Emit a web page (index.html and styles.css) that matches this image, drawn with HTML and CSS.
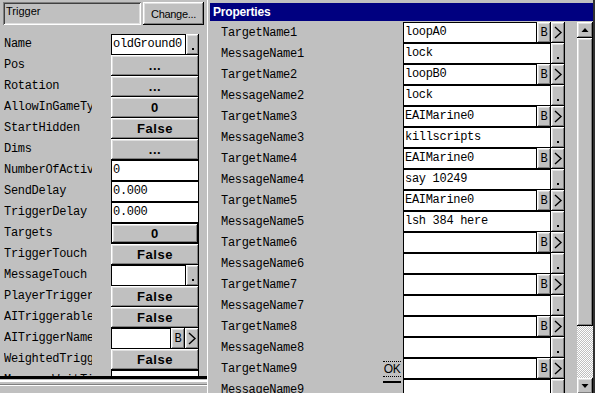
FILE: index.html
```html
<!DOCTYPE html>
<html>
<head>
<meta charset="utf-8">
<link rel="stylesheet" href="styles.css">
</head>
<body>
<div class="left">
  <div class="top">
    <div class="inset">Trigger</div>
    <div class="change raised">Change...</div>
  </div>
  <div class="list">
    <div class="lrow"><div class="llabel">Name</div><div class="lval"><div class="field">oldGround0</div><div class="dot raised"><i></i></div></div></div>
    <div class="lrow"><div class="llabel">Pos</div><div class="lval"><div class="btn raised">...</div></div></div>
    <div class="lrow"><div class="llabel">Rotation</div><div class="lval"><div class="btn raised">...</div></div></div>
    <div class="lrow"><div class="llabel">AllowInGameTypes</div><div class="lval"><div class="btn raised">0</div></div></div>
    <div class="lrow"><div class="llabel">StartHidden</div><div class="lval"><div class="btn raised">False</div></div></div>
    <div class="lrow"><div class="llabel">Dims</div><div class="lval"><div class="btn raised">...</div></div></div>
    <div class="lrow"><div class="llabel">NumberOfActivations</div><div class="lval"><div class="field">0</div></div></div>
    <div class="lrow"><div class="llabel">SendDelay</div><div class="lval"><div class="field">0.000</div></div></div>
    <div class="lrow"><div class="llabel">TriggerDelay</div><div class="lval"><div class="field">0.000</div></div></div>
    <div class="lrow"><div class="llabel">Targets</div><div class="lval"><div class="btn raised default">0</div></div></div>
    <div class="lrow"><div class="llabel">TriggerTouch</div><div class="lval"><div class="btn raised">False</div></div></div>
    <div class="lrow"><div class="llabel">MessageTouch</div><div class="lval"><div class="field"></div><div class="dot raised"><i></i></div></div></div>
    <div class="lrow"><div class="llabel">PlayerTriggerable</div><div class="lval"><div class="btn raised">False</div></div></div>
    <div class="lrow"><div class="llabel">AITriggerable</div><div class="lval"><div class="btn raised">False</div></div></div>
    <div class="lrow"><div class="llabel">AITriggerName</div><div class="lval"><div class="field"></div><div class="sbtn raised">B</div><div class="sbtn raised"><svg width="14" height="21" viewBox="0 0 14 21"><polyline points="4,5 10,10.5 4,16" fill="none" stroke="#000" stroke-width="1.4"/></svg></div></div></div>
    <div class="lrow"><div class="llabel">WeightedTrigger</div><div class="lval"><div class="btn raised">False</div></div></div>
    <div class="lrow"><div class="llabel">MessageWaitTime</div><div class="lval"><div class="field"></div></div></div>
  </div>
  <div class="splitter"></div>
</div>

<div class="right">
  <div class="title">Properties</div>
  <div class="content">
    <div class="rlist">
      <div class="rrow"><div class="rlabel">TargetName1</div><div class="field">loopA0</div><div class="sbtn raised">B</div><div class="sbtn raised"><svg width="14" height="21" viewBox="0 0 14 21"><polyline points="4,5 10,10.5 4,16" fill="none" stroke="#000" stroke-width="1.4"/></svg></div></div>
      <div class="rrow"><div class="rlabel">MessageName1</div><div class="field">lock</div><div class="dot raised"><i></i></div></div>
      <div class="rrow"><div class="rlabel">TargetName2</div><div class="field">loopB0</div><div class="sbtn raised">B</div><div class="sbtn raised"><svg width="14" height="21" viewBox="0 0 14 21"><polyline points="4,5 10,10.5 4,16" fill="none" stroke="#000" stroke-width="1.4"/></svg></div></div>
      <div class="rrow"><div class="rlabel">MessageName2</div><div class="field">lock</div><div class="dot raised"><i></i></div></div>
      <div class="rrow"><div class="rlabel">TargetName3</div><div class="field">EAIMarine0</div><div class="sbtn raised">B</div><div class="sbtn raised"><svg width="14" height="21" viewBox="0 0 14 21"><polyline points="4,5 10,10.5 4,16" fill="none" stroke="#000" stroke-width="1.4"/></svg></div></div>
      <div class="rrow"><div class="rlabel">MessageName3</div><div class="field">killscripts</div><div class="dot raised"><i></i></div></div>
      <div class="rrow"><div class="rlabel">TargetName4</div><div class="field">EAIMarine0</div><div class="sbtn raised">B</div><div class="sbtn raised"><svg width="14" height="21" viewBox="0 0 14 21"><polyline points="4,5 10,10.5 4,16" fill="none" stroke="#000" stroke-width="1.4"/></svg></div></div>
      <div class="rrow"><div class="rlabel">MessageName4</div><div class="field">say 10249</div><div class="dot raised"><i></i></div></div>
      <div class="rrow"><div class="rlabel">TargetName5</div><div class="field">EAIMarine0</div><div class="sbtn raised">B</div><div class="sbtn raised"><svg width="14" height="21" viewBox="0 0 14 21"><polyline points="4,5 10,10.5 4,16" fill="none" stroke="#000" stroke-width="1.4"/></svg></div></div>
      <div class="rrow"><div class="rlabel">MessageName5</div><div class="field">lsh 384 here</div><div class="dot raised"><i></i></div></div>
      <div class="rrow"><div class="rlabel">TargetName6</div><div class="field"></div><div class="sbtn raised">B</div><div class="sbtn raised"><svg width="14" height="21" viewBox="0 0 14 21"><polyline points="4,5 10,10.5 4,16" fill="none" stroke="#000" stroke-width="1.4"/></svg></div></div>
      <div class="rrow"><div class="rlabel">MessageName6</div><div class="field"></div><div class="dot raised"><i></i></div></div>
      <div class="rrow"><div class="rlabel">TargetName7</div><div class="field"></div><div class="sbtn raised">B</div><div class="sbtn raised"><svg width="14" height="21" viewBox="0 0 14 21"><polyline points="4,5 10,10.5 4,16" fill="none" stroke="#000" stroke-width="1.4"/></svg></div></div>
      <div class="rrow"><div class="rlabel">MessageName7</div><div class="field"></div><div class="dot raised"><i></i></div></div>
      <div class="rrow"><div class="rlabel">TargetName8</div><div class="field"></div><div class="sbtn raised">B</div><div class="sbtn raised"><svg width="14" height="21" viewBox="0 0 14 21"><polyline points="4,5 10,10.5 4,16" fill="none" stroke="#000" stroke-width="1.4"/></svg></div></div>
      <div class="rrow"><div class="rlabel">MessageName8</div><div class="field"></div><div class="dot raised"><i></i></div></div>
      <div class="rrow"><div class="rlabel"><span class="rtext">TargetName9</span><div class="okwrap"><div class="ok">OK</div><div class="okline"></div></div></div><div class="field"></div><div class="sbtn raised">B</div><div class="sbtn raised"><svg width="14" height="21" viewBox="0 0 14 21"><polyline points="4,5 10,10.5 4,16" fill="none" stroke="#000" stroke-width="1.4"/></svg></div></div>
      <div class="rrow"><div class="rlabel">MessageName9</div><div class="field"></div><div class="dot raised"><i></i></div></div>
    </div>
    <div class="scroll">
      <div class="sbb raised"><svg width="16" height="16" viewBox="0 0 16 16"><polygon points="4.5,10 11.5,10 8,6" fill="#000"/></svg></div>
      <div class="thumb raised"></div>
      <div class="track"></div>
      <div class="sbb raised"><svg width="16" height="16" viewBox="0 0 16 16"><polygon points="4.5,6 11.5,6 8,10" fill="#000"/></svg></div>
    </div>
  </div>
</div>
</body>
</html>
```

FILE: styles.css
```css
* { box-sizing: border-box; }
html, body { margin: 0; padding: 0; }
body {
  width: 595px;
  height: 393px;
  overflow: hidden;
  background: #c0c0c0;
  display: flex;
  font-family: "Liberation Sans", Arial, sans-serif;
  color: #000;
}
.raised {
  background: #c0c0c0;
  box-shadow: inset -1px -1px #000, inset 1px 1px #fff, inset -2px -2px #808080, inset 2px 2px #dfdfdf;
}

/* left panel */
.left {
  width: 207px;
  flex: none;
  display: flex;
  flex-direction: column;
}
.top {
  display: flex;
  height: 25px;
  padding: 2px 0 0 3px;
}
.inset {
  width: 138px;
  height: 23px;
  margin-right: 2px;
  padding: 3px 3px;
  font-size: 11px;
  line-height: 13px;
  box-shadow: inset 1px 1px #808080, inset -1px -1px #fff, inset 2px 2px #404040, inset -2px -2px #dfdfdf;
}
.change {
  width: 61px;
  height: 23px;
  display: flex;
  align-items: center;
  justify-content: center;
  font-size: 11px;
  letter-spacing: -0.3px;
}
.list {
  margin-top: 9px;
  height: 342px;
  overflow: hidden;
}
.lrow {
  display: flex;
  height: 21px;
  align-items: center;
}
.llabel {
  width: 88px;
  margin-left: 4px;
  margin-right: 19px;
  padding-bottom: 2px;
  overflow: hidden;
  white-space: nowrap;
  font-family: "Liberation Mono", "Courier New", monospace;
  font-size: 12px;
  letter-spacing: -0.3px;
}
.lval {
  width: 88px;
  height: 21px;
  display: flex;
}
.field {
  flex: 1;
  min-width: 0;
  height: 21px;
  background: #fff;
  border: 1px solid #000;
  padding-left: 1px;
  font-family: "Liberation Mono", "Courier New", monospace;
  font-size: 12px;
  letter-spacing: -0.3px;
  line-height: 19px;
  white-space: nowrap;
  overflow: hidden;
}
.btn {
  flex: 1;
  height: 21px;
  display: flex;
  align-items: center;
  justify-content: center;
  font-weight: bold;
  font-size: 13px;
  letter-spacing: 0.6px;
}
.btn.default {
  border: 1px solid #000;
}
.dot {
  width: 13px;
  height: 21px;
  flex: none;
  display: flex;
  align-items: flex-end;
  justify-content: center;
  padding-bottom: 5px;
}
.dot i {
  display: block;
  width: 2px;
  height: 2px;
  background: #000;
}
.sbtn {
  width: 14px;
  height: 21px;
  flex: none;
  display: flex;
  align-items: center;
  justify-content: center;
  font-family: "Liberation Mono", "Courier New", monospace;
  font-size: 12px;
}
.sbtn svg { display: block; }
.splitter {
  flex: 1;
  background: linear-gradient(#000 0 3px, #c0c0c0 3px 4px, #fff 4px 6px, #c0c0c0 6px 8px, #808080 8px 9px, #fff 9px 10px, #c0c0c0 10px);
}

/* right window */
.right {
  flex: 1;
  border-left: 1px solid #fff;
  border-right: 2px solid #303030;
  padding: 3px 0 0 2px;
}
.title {
  height: 18px;
  background: #000080;
  color: #fff;
  font-weight: bold;
  font-size: 12px;
  letter-spacing: -0.2px;
  line-height: 18px;
  padding-left: 3px;
}
.content {
  margin-top: 1px;
  display: flex;
}
.rlist {
  width: 355px;
  margin-right: 12px;
}
.rrow {
  display: flex;
  height: 21px;
}
.rlabel {
  width: 193px;
  flex: none;
  padding-left: 11px;
  display: flex;
  align-items: center;
  font-family: "Liberation Mono", "Courier New", monospace;
  font-size: 12px;
  letter-spacing: -0.3px;
}
.rrow .dot { width: 14px; }
.okwrap {
  margin-left: auto;
  margin-right: 2px;
  align-self: flex-start;
  margin-top: 3px;
  display: flex;
  flex-direction: column;
}
.ok {
  width: 18px;
  height: 16px;
  border-top: 1px dotted #000;
  border-bottom: 1px dotted #000;
  font-family: "Liberation Sans", Arial, sans-serif;
  font-size: 12px;
  line-height: 14px;
  text-align: center;
}
.okline {
  height: 2px;
  margin-top: 4px;
  background: #000;
}
.scroll {
  width: 16px;
  flex: none;
  display: flex;
  flex-direction: column;
}
.sbb { height: 16px; }
.sbb svg { display: block; }
.thumb { height: 288px; }
.track {
  height: 52px;
  background: repeating-conic-gradient(#fff 0 25%, #c0c0c0 0 50%) 0 0 / 2px 2px;
}
```
